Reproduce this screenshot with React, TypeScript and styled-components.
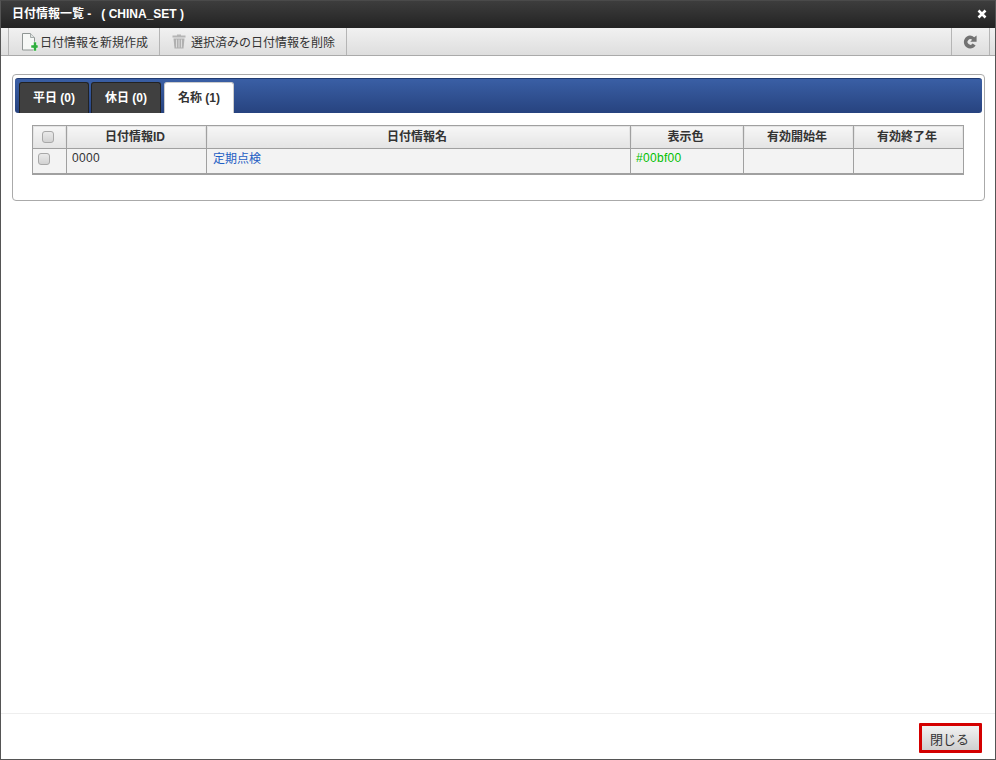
import React from 'react';
import styled, { createGlobalStyle } from 'styled-components';

const GlobalStyle = createGlobalStyle`
  html, body {
    margin: 0;
    padding: 0;
    background: #fff;
  }
  body {
    font-family: 'Liberation Sans', 'Noto Sans CJK JP', sans-serif;
    font-size: 12px;
    color: #333;
  }
`;

const columns = [
  { label: '日付情報ID', width: 140 },
  { label: '日付情報名', width: 424 },
  { label: '表示色', width: 113 },
  { label: '有効開始年', width: 110 },
  { label: '有効終了年', width: 110 }
];

const AddFileIcon = () => (
  <svg width="17" height="20" viewBox="0 0 17 20">
    <path d="M1.5 1.5h8l4 4v12.5h-12z" fill="#f6f8f6" stroke="#8f9694" />
    <path d="M9.5 1.5v4h4" fill="#dfe3e2" stroke="#a5abaa" />
    <path d="M10 13h2.5v-3h3v3H17v3h-1.5v3h-3v-3H10z" fill="#2fae3e" stroke="#fff" strokeWidth="0.5" />
  </svg>
);

const TrashIcon = () => (
  <svg width="14" height="15" viewBox="0 0 14 15">
    <path d="M5 0.5h4v1h4.5v2H0.5v-2H5z" fill="#b5b5b5" />
    <path d="M1.5 4.5h11l-1 10h-9z" fill="#b0b0b0" />
    <path d="M4.5 5.5v8M7 5.5v8M9.5 5.5v8" stroke="#dcdcdc" />
  </svg>
);

const RefreshIcon = () => (
  <svg width="14" height="14" viewBox="0 0 14 14">
    <path
      d="M7 0.6a6.4 6.4 0 0 1 4.2 1.6L13.6 0.4V6.8H7.2l2-2A2.8 2.8 0 1 0 9.6 8.6l3 1.9A6.4 6.4 0 1 1 7 0.6z"
      fill="#727272"
    />
  </svg>
);

const CloseIcon = () => (
  <svg width="10" height="10" viewBox="0 0 10 10">
    <path d="M1.5 1.5l7 7M8.5 1.5l-7 7" stroke="#fff" strokeWidth="2.6" />
  </svg>
);

export default function App() {
  return (
    <>
      <GlobalStyle />
      <Dialog>
        <TitleBar>
          <Title>日付情報一覧 -&nbsp;&nbsp;&nbsp;( CHINA_SET )</Title>
          <CloseButton>
            <CloseIcon />
          </CloseButton>
        </TitleBar>
        <Toolbar>
          <ToolButton $first>
            <AddFileIcon />
            日付情報を新規作成
          </ToolButton>
          <ToolButton>
            <TrashIcon />
            選択済みの日付情報を削除
          </ToolButton>
          <RefreshButton>
            <RefreshIcon />
          </RefreshButton>
        </Toolbar>
        <Content>
          <Panel>
            <TabBar>
              <Tab>平日 (0)</Tab>
              <Tab>休日 (0)</Tab>
              <Tab $active>名称 (1)</Tab>
            </TabBar>
            <TableWrap>
              <Table>
                <colgroup>
                  <col width={34} />
                  {columns.map((c) => (
                    <col key={c.label} width={c.width} />
                  ))}
                </colgroup>
                <thead>
                  <tr>
                    <HeadCell>
                      <Check $head />
                    </HeadCell>
                    {columns.map((c) => (
                      <HeadCell key={c.label}>{c.label}</HeadCell>
                    ))}
                  </tr>
                </thead>
                <tbody>
                  <tr>
                    <BodyCell>
                      <Check />
                    </BodyCell>
                    <BodyCell>
                      <PlainValue>0000</PlainValue>
                    </BodyCell>
                    <BodyCell>
                      <NameLink>定期点検</NameLink>
                    </BodyCell>
                    <BodyCell>
                      <ColorCode>#00bf00</ColorCode>
                    </BodyCell>
                    <BodyCell />
                    <BodyCell />
                  </tr>
                </tbody>
              </Table>
            </TableWrap>
          </Panel>
        </Content>
        <Footer>
          <CloseAction>閉じる</CloseAction>
        </Footer>
      </Dialog>
    </>
  );
}

const Dialog = styled.div`
  display: flex;
  flex-direction: column;
  box-sizing: border-box;
  width: 996px;
  height: 760px;
  border: 1px solid #555;
  border-top-color: #4a4a4a;
  background: #fff;
`;

const TitleBar = styled.div`
  display: flex;
  align-items: center;
  justify-content: space-between;
  box-sizing: border-box;
  height: 27px;
  padding: 0 8px 0 11px;
  background: linear-gradient(#3d3d3d, #232323);
`;

const Title = styled.div`
  color: #fff;
  font-size: 12px;
  font-weight: bold;
  margin-top: -4px;
`;

const CloseButton = styled.span`
  display: flex;
  margin-top: -2px;
`;

const Toolbar = styled.div`
  display: flex;
  box-sizing: border-box;
  height: 28px;
  padding-left: 7px;
  background: linear-gradient(#f1f1f1, #dedede);
  border-bottom: 1px solid #aaa;
`;

const ToolButton = styled.div<{ $first?: boolean }>`
  display: flex;
  align-items: center;
  gap: ${(p) => (p.$first ? '2px' : '5px')};
  padding: 0 11px 0 12px;
  color: #333;
  font-size: 12px;
  border-right: 1px solid #b5b5b5;
  border-left: ${(p) => (p.$first ? '1px solid #b5b5b5' : 'none')};
`;

const RefreshButton = styled.div`
  display: flex;
  align-items: center;
  justify-content: center;
  width: 35px;
  margin-left: auto;
  margin-right: 5px;
  padding-right: 2px;
  border-left: 1px solid #b5b5b5;
  border-right: 1px solid #b5b5b5;
`;

const Content = styled.div`
  flex: 1;
  padding: 18px 10px 0 11px;
`;

const Panel = styled.div`
  box-sizing: border-box;
  height: 127px;
  padding: 3px 2px;
  border: 1px solid #aaa;
  border-radius: 4px;
`;

const TabBar = styled.div`
  display: flex;
  align-items: flex-end;
  gap: 2px;
  box-sizing: border-box;
  height: 35px;
  padding: 0 4px;
  background: linear-gradient(#3a5fa5, #27437f);
  border-radius: 3px;
  border-top: 1px solid #1f3a72;
`;

const Tab = styled.div<{ $active?: boolean }>`
  display: flex;
  align-items: center;
  justify-content: center;
  box-sizing: border-box;
  width: 70px;
  height: 31px;
  padding-bottom: 4px;
  margin-left: ${(p) => (p.$active ? '1px' : '0')};
  font-weight: bold;
  font-size: 12px;
  color: ${(p) => (p.$active ? '#333' : '#fff')};
  background: ${(p) => (p.$active ? '#fff' : '#404040')};
  border: 1px solid ${(p) => (p.$active ? '#ccc' : '#222')};
  border-bottom: none;
  border-radius: 3px 3px 0 0;
`;

const TableWrap = styled.div`
  padding: 12px 17px 0;
`;

const Table = styled.table`
  width: 932px;
  border-collapse: collapse;
  table-layout: fixed;
  border: 1px solid #a0a0a0;
`;

const HeadCell = styled.th`
  box-sizing: border-box;
  height: 23px;
  padding: 0 3px 4px 0;
  font-size: 12px;
  font-weight: bold;
  color: #333;
  text-align: center;
  background: linear-gradient(#f6f6f6, #e4e4e4);
  border: 1px solid #a0a0a0;
  box-shadow: inset 0 0 0 1px #e4e4e4;
`;

const BodyCell = styled.td`
  box-sizing: border-box;
  height: 25px;
  padding: 0 0 5px 5px;
  font-size: 12px;
  color: #333;
  background: #f3f3f3;
  border: 1px solid #a0a0a0;
  border-bottom-width: 2px;
`;

const Check = styled.span<{ $head?: boolean }>`
  display: block;
  box-sizing: border-box;
  width: 12px;
  height: 12px;
  margin: ${(p) => (p.$head ? '4px 0 0 9px' : '1px 0 0 0')};
  background: linear-gradient(#eaeaea, #d2d2d2);
  border: 1px solid #a8a8a8;
  border-radius: 3px;
`;

const PlainValue = styled.span`
  letter-spacing: 0.3px;
`;

const NameLink = styled.a`
  color: #1f5fc4;
  margin-left: 1px;
  position: relative;
  top: -1px;
`;

const ColorCode = styled.span`
  color: #00bf00;
  letter-spacing: 0.3px;
`;

const Footer = styled.div`
  display: flex;
  justify-content: flex-end;
  align-items: flex-start;
  box-sizing: border-box;
  height: 46px;
  padding: 9px 13px 0 0;
  border-top: 1px solid #eee;
`;

const CloseAction = styled.button`
  box-sizing: border-box;
  width: 63px;
  height: 30px;
  padding: 0 2px 0 0;
  font-family: inherit;
  font-size: 13px;
  color: #333;
  background: linear-gradient(#f2f2f2, #cfcfcf);
  border: 3px solid #d40000;
  border-radius: 1px;
`;
